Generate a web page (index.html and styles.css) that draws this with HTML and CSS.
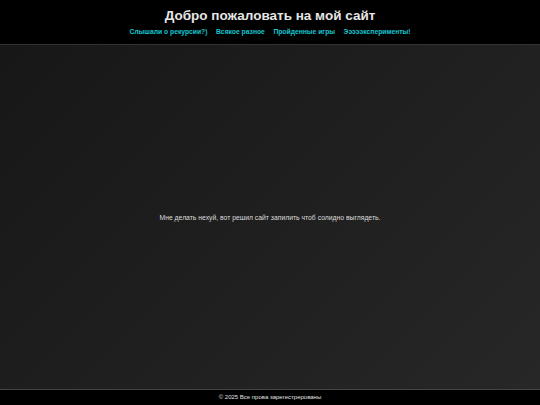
FILE: index.html
```html
<!DOCTYPE html>
<html lang="ru">
<head>
<meta charset="utf-8">
<title>Добро пожаловать на мой сайт</title>
<link rel="stylesheet" href="styles.css">
</head>
<body>
<div class="page">
  <header class="site-header">
    <h1 class="site-title">Добро пожаловать на мой сайт</h1>
    <nav class="site-nav">
      <a href="#">Слышали о рекурсии?)</a>
      <a href="#">Всякое разное</a>
      <a href="#">Пройденные игры</a>
      <a href="#">Эээээксперименты!</a>
    </nav>
  </header>
  <main class="site-main">
    <p class="intro">Мне делать нехуй, вот решил сайт запилить чтоб солидно выглядеть.</p>
  </main>
  <footer class="site-footer">© 2025 Все прова зарегестрерованы</footer>
</div>
</body>
</html>
```
FILE: styles.css
```css
html, body {
  margin: 0;
  padding: 0;
  height: 100%;
}
body {
  font-family: "Liberation Sans", Arial, sans-serif;
  background: #000;
  color: #e0e0e0;
}
.page {
  display: flex;
  flex-direction: column;
  height: 100vh;
}
.site-header {
  background: #000;
  border-bottom: 1px solid #333;
  padding: 7px 0 7px;
  text-align: center;
  height: 30px;
}
.site-title {
  margin: 0;
  font-size: 13.5px;
  line-height: 18px;
  font-weight: bold;
  color: #e6e6e6;
}
.site-nav {
  display: flex;
  justify-content: center;
  gap: 8.5px;
  margin-top: 2px;
}
.site-nav a {
  color: #16c6d2;
  text-decoration: none;
  font-size: 6.75px;
  font-weight: bold;
  line-height: 10px;
}
.site-main {
  flex: 1;
  display: flex;
  align-items: center;
  justify-content: center;
  background: linear-gradient(135deg, #171717 0%, #1f1f1f 50%, #272727 100%);
}
.intro {
  margin: 0;
  font-size: 6.8px;
  color: #dcdcdc;
}
.site-footer {
  background: #000;
  border-top: 1px solid #444;
  height: 15px;
  line-height: 15px;
  text-align: center;
  font-size: 6px;
  color: #e0e0e0;
}
```
